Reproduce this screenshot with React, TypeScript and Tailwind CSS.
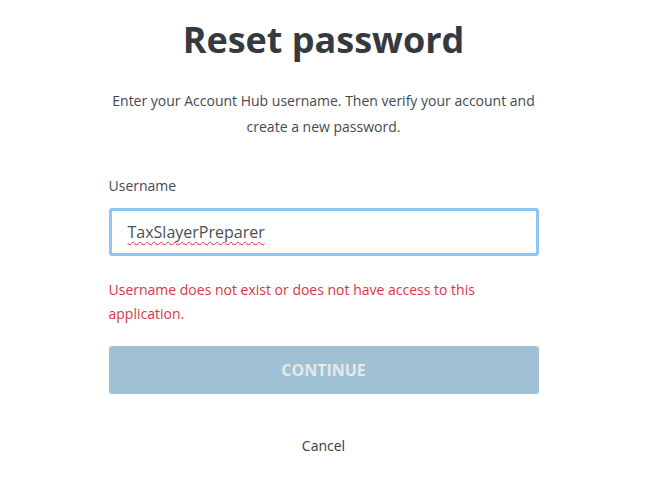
import React from "react";

export default function App() {
  return (
    <div
      className="min-h-[498px] w-full bg-white"
      style={{ fontFamily: '"Open Sans", "Liberation Sans", sans-serif' }}
    >
      <div className="mx-auto w-[430px] flex flex-col">
        <h1 className="pt-[18px] text-center text-[36px] font-bold leading-[44px] text-[#343a40]">
          Reset password
        </h1>
        <p className="mt-[26px] text-center text-[14px] leading-[26px] text-[#444a50]">
          Enter your Account Hub username. Then verify your account and create a new password.
        </p>
        <label className="mt-[36px] text-[14px] leading-[20px] text-[#444a50]">Username</label>
        <div className="mt-[12px] flex h-[48px] items-center rounded-[3px] border-[3px] border-[#8ec5f3] bg-white pl-[16px] text-[16px] text-[#4a4f55]">
          <span className="underline decoration-wavy decoration-[#e02828] decoration-1 underline-offset-[3px] [text-decoration-skip-ink:none]">
            TaxSlayerPreparer
          </span>
        </div>
        <p className="mt-[22px] text-[14px] leading-[24px] text-[#dc3545]">
          Username does not exist or does not have access to this application.
        </p>
        <button className="mt-[20px] flex h-[48px] w-full items-center justify-center rounded-[3px] bg-[#a0c1d3] text-[16px] font-bold text-[#e6e8ea]">
          CONTINUE
        </button>
        <div className="mt-[42px] text-center text-[14px] leading-[20px] text-[#343a40]">Cancel</div>
      </div>
    </div>
  );
}
